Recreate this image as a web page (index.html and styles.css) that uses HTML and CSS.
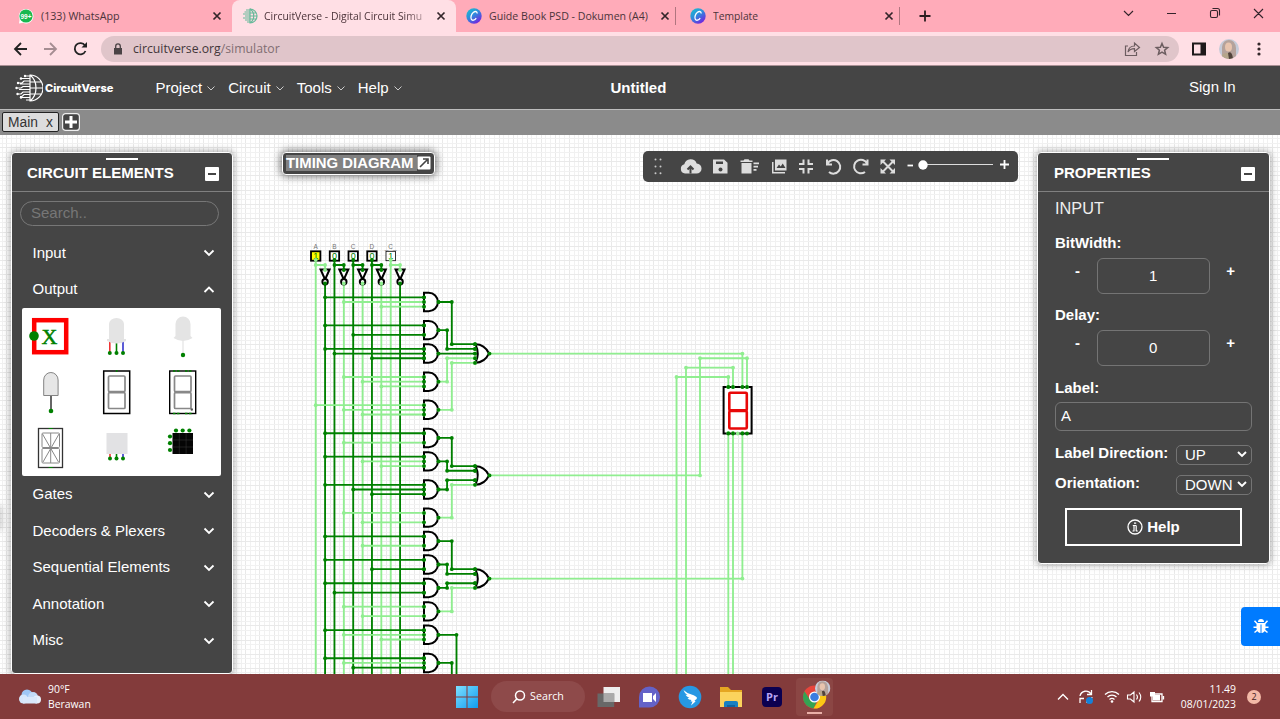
FILE: index.html
```html
<!DOCTYPE html>
<html lang="en">
<head>
<meta charset="utf-8">
<title>CircuitVerse - Digital Circuit Simulator</title>
<link rel="stylesheet" href="styles.css">
</head>
<body>
<div class="screen">
  <header class="tabs">
    <div class="tab tab-first">
      <svg class="fav" viewBox="0 0 16 16"><path d="M1 15.500l.6-4A7.300 7.300 0 1 1 5 14.800z" fill="#fff"/><circle cx="8" cy="8" r="6.600" fill="#18b850"/><text x="8" y="10.500" class="favtext">99+</text></svg>
      <span class="tab-label l1">(133) WhatsApp</span>
      <svg class="x" viewBox="0 0 10 10"><path d="M1.500 1.500l7 7M8.500 1.500l-7 7"/></svg>
    </div>
    <div class="tab tab-active">
      <svg class="fav" viewBox="0 0 16 16" fill="none" stroke="#67b99a" stroke-width="1.200"><path d="M8 1a7 7 0 0 1 0 14zM8 1c5 3 5 11 0 14M8 5h6.500M8 8h7M8 11h6.500M8 2H4M8 4H2.500M8 6H1M8 8H3M8 10H1M8 12H3M8 14H5"/></svg>
      <span class="tab-label l2 fade">CircuitVerse - Digital Circuit Simu</span>
      <svg class="x" viewBox="0 0 10 10"><path d="M1.500 1.500l7 7M8.500 1.500l-7 7"/></svg>
    </div>
    <div class="tab tab-third">
      <svg class="fav" viewBox="0 0 16 16"><circle cx="8" cy="8" r="7.700" fill="url(#canva)"/><path d="M11 5.500c.5-2-1.500-2.700-3.500-1.200S4.300 9 5.200 11s3.600 1.500 5-.8" fill="none" stroke="#fff" stroke-width="1.300"/></svg>
      <span class="tab-label l3">Guide Book PSD - Dokumen (A4)</span>
      <svg class="x" viewBox="0 0 10 10"><path d="M1.500 1.500l7 7M8.500 1.500l-7 7"/></svg>
    </div>
    <div class="tab tab-fourth">
      <svg class="fav" viewBox="0 0 16 16"><defs><linearGradient id="canva" x1="0" y1="0" x2=".7" y2="1"><stop offset="0" stop-color="#18c5cc"/><stop offset=".5" stop-color="#2e8cdc"/><stop offset="1" stop-color="#7422df"/></linearGradient></defs><circle cx="8" cy="8" r="7.700" fill="url(#canva)"/><path d="M11 5.500c.5-2-1.500-2.700-3.500-1.200S4.300 9 5.200 11s3.600 1.500 5-.8" fill="none" stroke="#fff" stroke-width="1.300"/></svg>
      <span class="tab-label l4">Template</span>
      <svg class="x" viewBox="0 0 10 10"><path d="M1.500 1.500l7 7M8.500 1.500l-7 7"/></svg>
    </div>
    <svg class="newtab" viewBox="0 0 12 12"><path d="M6 .5v11M.5 6h11"/></svg>
    <svg class="winctl" viewBox="0 0 150 20"><path d="M5 8l4.500 4.500L14 8M48 10.500h9M135 6l9 9M144 6l-9 9"/><rect x="91.500" y="7.500" width="7" height="7" rx="1.500"/><path d="M93.500 5.500h5a2 2 0 0 1 2 2v5"/></svg>
  </header>

  <div class="address">
    <svg class="nav-icons" viewBox="0 0 80 20"><path d="M20 10H8M14 4l-6 6 6 6" stroke="#222"/><path d="M37 10h12M43 4l6 6-6 6" stroke="#a58d92"/><path d="M79 6.500A5.600 5.600 0 1 0 79.500 12" stroke="#222" transform="translate(-1)"/><path d="M80 3v5.500h-5.500z" fill="#222"/></svg>
    <div class="omnibox">
      <svg class="lock" viewBox="0 0 10 12"><path d="M1 5h8v6.500H1z" fill="#4a4345"/><path d="M2.700 5V3.200a2.300 2.300 0 0 1 4.600 0V5" fill="none" stroke="#4a4345" stroke-width="1.300"/></svg>
      <span class="url">circuitverse.org<span>/simulator</span></span>
      <svg class="omni-icons" viewBox="0 0 46 16"><path d="M4 5H1.500v9.500h11V11M4 11c.5-4 3-6 6.500-6V2l5 4.500-5 4V7.700C8 7.700 5.500 8.500 4 11z"/><path d="M38 2.500l1.600 3.800 4.100.3-3.100 2.700 1 4L38 11.200l-3.600 2.100 1-4-3.100-2.700 4.100-.3z" stroke-width="1.500"/></svg>
    </div>
    <svg class="sidepanel" viewBox="0 0 14 14"><path d="M1 1.500h12v11H1z" fill="none" stroke="#1f1a1b" stroke-width="2"/><path d="M8.500 1h5v12h-5z" fill="#1f1a1b"/></svg>
    <svg class="avatar" viewBox="0 0 20 20"><use href="#face"/></svg>
    <svg class="dots" viewBox="0 0 4 14"><circle cx="2" cy="2" r="1.600"/><circle cx="2" cy="7" r="1.600"/><circle cx="2" cy="12" r="1.600"/></svg>
  </div>

  <nav class="appbar">
    <svg class="logo" viewBox="0 0 28 28" fill="none" stroke="#fff" stroke-width="1.200"><path d="M15 1a13 13 0 0 1 0 26zM15 1c8 6 8 20 0 26M15 8h11M15 14h13M15 20h11"/><path d="M15 2H10M15 4.500H6M15 7H9L7 9H3M15 10H5M15 12.500H8L6 14H1M15 15.500H4M15 18H8l-2 2H2M15 20.500H9l-2 2H5M15 23.500H7M15 26h-4"/><g fill="#fff" stroke="none"><circle cx="10" cy="2" r="1.200"/><circle cx="6" cy="4.500" r="1.200"/><circle cx="3" cy="9" r="1.200"/><circle cx="1.500" cy="14" r="1.200"/><circle cx="2.500" cy="20" r="1.200"/><circle cx="6" cy="23.500" r="1.200"/></g></svg>
    <span class="brand">CircuitVerse</span>
    <ul class="menu">
      <li>Project<svg viewBox="0 0 8 5"><path d="M.5.500L4 4 7.500.5"/></svg></li>
      <li>Circuit<svg viewBox="0 0 8 5"><path d="M.5.500L4 4 7.500.5"/></svg></li>
      <li>Tools<svg viewBox="0 0 8 5"><path d="M.5.500L4 4 7.500.5"/></svg></li>
      <li>Help<svg viewBox="0 0 8 5"><path d="M.5.500L4 4 7.500.5"/></svg></li>
    </ul>
    <strong class="project-name">Untitled</strong>
    <span class="signin">Sign In</span>
  </nav>

  <div class="circuit-tabs">
    <div class="circuit-tab"><span>Main</span><span>x</span></div>
    <svg class="add" viewBox="0 0 18 18"><rect x=".6" y=".6" width="16.800" height="16.800" rx="3" fill="#444" stroke="#eee" stroke-width="1.200"/><path d="M9 3v12M3 9h12" stroke="#fff" stroke-width="3"/></svg>
  </div>

  <main class="workspace">
    <svg class="canvas" id="canvas" viewBox="0 135 1280 539"></svg>

    <section class="panel elements">
      <div class="panel-head"><i class="grip"></i><h2>CIRCUIT ELEMENTS</h2><b class="min"></b></div>
      <div class="search">Search..</div>
      <div class="cat first">Input<svg viewBox="0 0 12 8"><path d="M1.500 1.500L6 6l4.500-4.500"/></svg></div>
      <div class="cat out">Output<svg viewBox="0 0 12 8"><path d="M1.500 6L6 1.500 10.500 6"/></svg></div>
      <div class="parts">
        <svg viewBox="0 0 66 56"><rect x="12.200" y="12.200" width="32" height="32" fill="#fff" stroke="#f00" stroke-width="4.500"/><circle cx="12" cy="28" r="4.800" fill="green"/><text x="27.500" y="35.500" class="xglyph">X</text></svg>
        <svg viewBox="0 0 66 56"><g stroke-width="1.600"><path d="M21.800 33v11" stroke="#e33"/><path d="M28.500 33v11" stroke="green"/><path d="M35 33v11" stroke="#33c"/></g><path d="M21 31V16a7.500 6 0 0 1 15 0v15h2v2q-9.500 5-19 0v-2z" fill="#e4e4e4"/><g fill="green"><circle cx="21.800" cy="45" r="2"/><circle cx="28.500" cy="45" r="2"/><circle cx="35" cy="45" r="2"/></g></svg>
        <svg viewBox="0 0 66 56"><path d="M29 32v13" stroke="#ddd"/><path d="M21.500 28V16a7.500 7.500 0 0 1 15 0v12l2 2q-9.500 6-19 0z" fill="#e4e4e4"/><circle cx="29" cy="47" r="2.200" fill="green"/></svg>
        <svg viewBox="0 0 66 56"><path d="M21.700 31.500V16a7.200 7.500 0 0 1 14.400 0v15.500z" fill="#e6e6e6" stroke="#777" stroke-width=".9"/><path d="M29 32v14" stroke="#333" stroke-width="1.500"/><circle cx="29" cy="47" r="2.300" fill="green"/></svg>
        <svg viewBox="0 0 66 56"><rect x="15.700" y="7" width="26" height="42.500" fill="#fff" stroke="#000" stroke-width="1.500"/><g class="segments"><rect x="20.500" y="12" width="16.500" height="15.500" rx="1"/><rect x="20.500" y="28.700" width="16.500" height="15.800" rx="1"/></g><circle cx="28.700" cy="7" r="1" fill="green"/></svg>
        <svg viewBox="0 0 66 56"><rect x="15.700" y="7" width="26" height="42.500" fill="#fff" stroke="#000" stroke-width="1.400"/><g class="segments"><rect x="20.500" y="12" width="16.500" height="15.500" rx="1"/><rect x="20.500" y="28.700" width="16.500" height="15.800" rx="1"/></g><circle cx="37.800" cy="45.500" r="1.200" fill="#555"/><path d="M19 7h7M31 7h7M19 49.500h7M31 49.500h7" stroke="green" stroke-width="1.600" stroke-dasharray="2.500 1.500"/></svg>
        <svg viewBox="0 0 66 56"><rect x="16.500" y="8.500" width="24" height="39" fill="#fff" stroke="#333" stroke-width="1.300"/><g class="segments thin"><rect x="20" y="13" width="17.500" height="14.500" rx="1"/><rect x="20" y="28.500" width="17.500" height="14.500" rx="1"/><path d="M28.700 13v30M20.500 14l16 28M37 14L21 42"/></g><path d="M26.700 8.500h4M26.700 47.500h4" stroke="green"/></svg>
        <svg viewBox="0 0 66 56"><rect x="18.500" y="13" width="21" height="21" fill="#e2e2e4"/><g stroke-width="1.600"><path d="M22 34v5" stroke="#e33"/><path d="M28.500 34v5" stroke="green"/><path d="M35 34v5" stroke="#33c"/></g><g fill="green"><circle cx="22" cy="38.500" r="2"/><circle cx="28.500" cy="38.500" r="2"/><circle cx="35" cy="38.500" r="2"/></g></svg>
        <svg viewBox="0 0 66 56"><rect x="18.500" y="13" width="20.500" height="21" fill="#050505"/><path d="M25.300 13v21M32.100 13v21M18.500 20h20.500M18.500 27h20.500" stroke="#333" stroke-width=".6"/><g fill="green"><circle cx="22" cy="10.500" r="2.100"/><circle cx="28.700" cy="10.500" r="2.100"/><circle cx="35.400" cy="10.500" r="2.100"/><circle cx="16" cy="16.500" r="2.100"/><circle cx="16" cy="23.200" r="2.100"/><circle cx="16" cy="30" r="2.100"/></g></svg>
      </div>
      <div class="cat">Gates<svg viewBox="0 0 12 8"><path d="M1.500 1.500L6 6l4.500-4.500"/></svg></div>
      <div class="cat">Decoders &amp; Plexers<svg viewBox="0 0 12 8"><path d="M1.500 1.500L6 6l4.500-4.500"/></svg></div>
      <div class="cat">Sequential Elements<svg viewBox="0 0 12 8"><path d="M1.500 1.500L6 6l4.500-4.500"/></svg></div>
      <div class="cat">Annotation<svg viewBox="0 0 12 8"><path d="M1.500 1.500L6 6l4.500-4.500"/></svg></div>
      <div class="cat">Misc<svg viewBox="0 0 12 8"><path d="M1.500 1.500L6 6l4.500-4.500"/></svg></div>
    </section>

    <div class="timing"><span>TIMING DIAGRAM</span><svg viewBox="0 0 14 14"><rect x=".5" y=".5" width="13" height="13" rx="1" fill="#fff"/><path d="M3 11l7-7M6 3h5v5" fill="none" stroke="#444" stroke-width="1.600"/></svg></div>

    <div class="toolbar">
      <svg viewBox="0 0 375 31">
        <g fill="#c8c8c8"><circle cx="12.500" cy="8.500" r="1"/><circle cx="17.500" cy="8.500" r="1"/><circle cx="12.500" cy="15.500" r="1"/><circle cx="17.500" cy="15.500" r="1"/><circle cx="12.500" cy="22.300" r="1"/><circle cx="17.500" cy="22.300" r="1"/></g>
        <g fill="#ddd">
          <path d="M42 22.500a4.700 4.700 0 0 1-.7-9.200 6.500 6.500 0 0 1 12.400-.8 5 5 0 0 1-.3 10z"/>
          <path d="M70 8.500h11l3.500 3.300v10.700H70z"/>
          <path d="M97.500 9.500h3l1-1.300h4l1 1.300h3V11h-12zM98.500 12h10v10.500h-10zM110.500 11.500h5.500v1.700h-5.500zM110.500 14.700h4.500v1.700h-4.500zM110.500 18h3v1.700h-3z"/>
          <path d="M132 8.500h11.500v11H132zM129 11h1.500v10h11.500v1.500h-13z"/>
        </g>
        <path d="M47.500 22.500v-6M44.500 18.500l3-3 3 3" fill="none" stroke="#444" stroke-width="2"/>
        <path d="M73 10.500h7V13h-7z" fill="#444"/><circle cx="77.500" cy="18.500" r="2" fill="#444"/>
        <path d="M133.500 17l2.500-3.500 1.700 2 2-3 2.800 4.500z" fill="#444"/>
        <g fill="none" stroke="#ddd" stroke-width="2">
          <path d="M156 13h4.500V8.500M170 13h-4.500V8.500M156 18h4.500v4.500M170 18h-4.500v4.500"/>
          <path d="M184 8.500v5h5M184.500 12.500A6.800 6.800 0 1 1 186 21"/>
          <path d="M224.500 8.500v5h-5M224 12.500A6.800 6.800 0 1 0 222 21"/>
          <path d="M239.500 10l11 11M250.500 10l-11 11"/>
        </g>
        <path d="M237.500 8.500h5.500l-5.500 5.500zM252 8.500v5.500l-5.500-5.500zM237.500 22.500V17l5.500 5.500zM252 22.500h-5.500L252 17z" fill="#ddd"/>
        <path d="M264.500 14.500h5.500" stroke="#fff" stroke-width="1.800"/><path d="M280 13.500h70" stroke="#ddd"/><circle cx="280" cy="14" r="4.700" fill="#fff"/><path d="M357 13.500h9M361.500 9v9" stroke="#fff" stroke-width="1.800"/>
      </svg>
    </div>

    <section class="panel properties">
      <div class="panel-head"><i class="grip"></i><h2>PROPERTIES</h2><b class="min"></b></div>
      <div class="props">
        <div class="kind">INPUT</div>
        <label class="name">BitWidth:</label>
        <div class="stepper"><b>-</b><div class="num">1</div><b>+</b></div>
        <label class="name">Delay:</label>
        <div class="stepper"><b>-</b><div class="num">0</div><b>+</b></div>
        <label class="name lab">Label:</label>
        <div class="textbox">A</div>
        <div class="row"><label>Label Direction:</label><div class="select">UP<svg viewBox="0 0 10 7"><path d="M1 1l4 4 4-4"/></svg></div></div>
        <div class="row"><label>Orientation:</label><div class="select">DOWN<svg viewBox="0 0 10 7"><path d="M1 1l4 4 4-4"/></svg></div></div>
        <div class="help"><svg viewBox="0 0 16 16"><circle cx="8" cy="8" r="7" fill="none" stroke="#fff" stroke-width="1.300"/><path d="M5.800 6.500h3.400M7 6.500V12M9.200 6.500V12M5.500 12h2M8.800 12h2M7 4.200h2.200" fill="none" stroke="#fff" stroke-width="1.200"/></svg>Help</div>
      </div>
    </section>

    <div class="bug"><svg viewBox="0 0 16 16"><path d="M5 4a3 3 0 0 1 6 0z" fill="#fff"/><path d="M3.500 5h9v5c0 3-2 5-4.500 5s-4.500-2-4.500-5z" fill="#fff"/><path d="M1.500 2.800L4 5.500M14.500 2.800L12 5.500M.5 9.200h15M1.500 14.500L4.500 12M14.500 14.500l-3-2.500" stroke="#fff" stroke-width="1.500"/><path d="M8 6.500V15" stroke="#007bff"/></svg></div>
    <div class="edge"></div>
  </main>

  <footer class="taskbar">
    <svg class="cloud" viewBox="0 0 24 18"><circle cx="9" cy="7" r="5.500" fill="#9fc7f5"/><circle cx="5.500" cy="11" r="4.500" fill="#d5e6fb"/><circle cx="15" cy="9" r="5" fill="#c3dbf8"/><circle cx="19" cy="11.500" r="4" fill="#e6effb"/><path d="M5 9h14v6.500H5z" fill="#d9e8fb"/></svg>
    <div class="weather">90°F<br>Berawan</div>
    <svg class="win" viewBox="0 0 22 22"><defs><linearGradient id="w" x1="0" y1="0" x2="1" y2="1"><stop stop-color="#7de0ff"/><stop offset="1" stop-color="#109bf0"/></linearGradient></defs><path d="M0 0h10.500v10.500H0zM11.500 0H22v10.500H11.500zM0 11.500h10.500V22H0zM11.500 11.500H22V22H11.500z" fill="url(#w)"/></svg>
    <div class="searchpill"><svg viewBox="0 0 14 14"><circle cx="8" cy="5.500" r="4.500"/><path d="M4.700 9L1 13"/></svg>Search</div>
    <div class="apps">
      <svg viewBox="0 0 24 24"><path d="M7.500 2H24v15H7.500z" fill="#eee"/><path d="M1.500 8.500h16.700V22H1.500z" fill="#686868"/><path d="M7.500 8.500h10.700V17H7.500z" fill="#aaa"/></svg>
      <svg viewBox="0 0 24 24"><path d="M2 22.500V12a10.500 10.500 0 1 1 10.500 10.500z" fill="#6462c8"/><path d="M6 8h9v9H6zM16 11l3-3v9l-3-3z" fill="#fff"/></svg>
      <svg viewBox="0 0 24 24"><circle cx="12" cy="12" r="11.300" fill="#2798e3"/><path d="M5.500 5q3 3 8 4.500 5 1.500 5.500 3.500 0 1-2.500 2.500l1 1-4.500 4 1.500-4h-2l1-1.500q-3 0-4-2l2-.3q-3-1-4-3l2 .3q-3-1.500-4-5z" fill="#fff"/></svg>
      <svg viewBox="0 0 24 24"><path d="M1 2h8l3 3h11v17H1z" fill="#e5a622"/><path d="M1 7h22v15H1z" fill="#fbd35d"/><path d="M5 22v-4q0-2 2-2h10q2 0 2 2v4z" fill="#1880c2"/><path d="M8 20h8v2H8z" fill="#0f639f"/></svg>
      <svg viewBox="0 0 24 24"><rect x="2" y="2" width="20" height="20" rx="4" fill="#0b0050"/><text x="12" y="16" class="pr">Pr</text></svg>
    </div>
    <div class="chrome"><svg viewBox="0 0 37 38">
      <defs><clipPath id="round"><circle cx="10" cy="10" r="10"/></clipPath>
      <g id="face" clip-path="url(#round)"><path d="M0 0h20v20H0z" fill="#c6cbd8"/><path d="M3 20V8q1-7 7-7t7 8v11z" fill="#b5a29b"/><ellipse cx="9.500" cy="8" rx="3.500" ry="4.500" fill="#e8c4ae"/><path d="M1 20q2-7 8-6l6 6z" fill="#b5a58b"/><path d="M9 14q4-3 5 6h-4z" fill="#51433b"/></g></defs>
      <circle cx="18.500" cy="19" r="11.500" fill="#e8453c"/><path d="M8.500 13.300A11.500 11.500 0 0 0 17.500 30.500L22 21l-7.500 1.500z" fill="#34a353"/><path d="M17.500 30.500A11.500 11.500 0 0 0 29.500 15H19l4.500 6z" fill="#fbc815"/><circle cx="18.500" cy="19" r="5.500" fill="#fff"/><circle cx="18.500" cy="19" r="4.300" fill="#3b7de0"/><use href="#face" transform="translate(19 2.500) scale(.77)"/></svg></div>
    <svg class="tray" viewBox="0 0 112 20"><g fill="none" stroke="#fff" stroke-width="1.300"><path d="M3 12.500l5-5 5 5"/><path d="M25 9a6 6 0 0 1 11-2M36.500 3v4.500H32M37 10a6 6 0 0 1-6 5M25 16v-4.500h4"/><path d="M50 7.500a10 10 0 0 1 14 0M52.500 10a6.500 6.500 0 0 1 9 0M54.500 12.500a3.800 3.800 0 0 1 5 0"/><path d="M72.500 8v4h3l3.500 3V5l-3.500 3zM81.500 7.500q2 2.500 0 5M84 5.500q3.500 4.500 0 9" stroke-width="1.100"/><path d="M97 7h10v7.500H97zM108.500 9v3.500"/></g><circle cx="34.500" cy="13.500" r="3.500" fill="#1681d8"/><circle cx="57" cy="14.500" r="1.300" fill="#fff"/><path d="M98 8h7v5.500h-7z" fill="#fff"/><path d="M95 5h5v4.500h-5z" fill="#fff"/></svg>
    <div class="clock">11.49<br>08/01/2023</div>
    <div class="notice">2</div>
  </footer>
</div>
<script src="circuit.js"></script>
</body>
</html>
```
FILE: styles.css
```css
* { box-sizing: border-box; }
body { margin: 0; font-family: "Liberation Sans", Arial, sans-serif; }
svg { display: block; flex: none; }
.screen { width: 1280px; height: 719px; display: flex; flex-direction: column; overflow: hidden; }

/* browser tabs */
.tabs { height: 32px; background: #ffabb9; display: flex; flex: none; font: 10.700px "Open Sans", sans-serif; color: #4c343a; }
.tab { display: flex; align-items: center; height: 32px; }
.tab-first { width: 232px; padding-left: 18px; }
.tab-active { width: 224px; padding-left: 10px; background: #ffdfe5; border-radius: 8px 8px 0 0; }
.tab-third { width: 224px; padding-left: 10px; }
.tab-fourth { width: 224px; padding-left: 10px; }
.tab-third, .tab-fourth { background: linear-gradient(#b0757f, #b0757f) right 4px center / 1px 18px no-repeat; }
.fav { width: 16px; height: 16px; }
.favtext { font: bold 6.500px "Liberation Sans"; fill: #fff; text-anchor: middle; }
.tab-label { margin-left: 7px; white-space: nowrap; overflow: hidden; line-height: 20px; }
.l1 { width: 171px; }
.l2 { width: 171px; margin-left: 6px; font-size: 10.400px; }
.l3 { width: 168px; font-size: 10.600px; }
.l4 { width: 168px; font-size: 10.300px; }
.fade { -webkit-mask-image: linear-gradient(90deg, #000 82%, transparent); mask-image: linear-gradient(90deg, #000 82%, transparent); }
.x { width: 10px; height: 10px; stroke: #33252a; stroke-width: 1.700; margin-left: 0; }
.tab-third .x, .tab-fourth .x { margin-left: 3px; }
.tab-active .x { margin-left: 1px; }
.newtab { width: 12px; height: 12px; margin: 10px 0 0 15px; stroke: #2b1d20; stroke-width: 1.800; }
.winctl { width: 150px; height: 20px; margin: 3px 11px 0 auto; fill: none; stroke: #33232a; stroke-width: 1.100; }

/* address row */
.address { height: 34px; flex: none; background: #ffdfe5; display: flex; align-items: center; border-bottom: 1px solid #a98f94; padding-left: 6px; }
.nav-icons { width: 80px; height: 20px; fill: none; stroke-width: 1.800; margin-left: 1px; }
.omnibox { width: 1078px; height: 26px; margin-left: 14px; border-radius: 13px; background: #e0c5ca; display: flex; align-items: center; padding-left: 12px; }
.lock { width: 10px; height: 12px; }
.url { margin-left: 10px; font: 12.250px "Open Sans", sans-serif; color: #43373a; }
.url span { color: #806e72; }
.omni-icons { width: 46px; height: 16px; margin-left: auto; margin-right: 9px; fill: none; stroke: #6c5d60; stroke-width: 1.200; }
.sidepanel { width: 14px; height: 14px; margin-left: 13px; }
.avatar { width: 20px; height: 20px; margin-left: 13px; }
.dots { width: 4px; height: 14px; margin-left: 18px; fill: #33272a; }

/* application bar */
.appbar { height: 43px; flex: none; background: #454545; color: #fff; display: flex; align-items: center; font-size: 15px; padding-left: 15px; }
.logo { width: 28px; height: 28px; }
.brand { width: 110.500px; margin-left: 2px; font: 800 11px Inter, sans-serif; }
.menu { display: flex; list-style: none; margin: 0; padding: 0; width: 455px; gap: 13px; }
.menu li { display: flex; align-items: center; }
.menu svg { width: 8px; height: 5px; margin: 2px 0 0 5px; fill: none; stroke: #ccc; stroke-width: 1; }
.project-name { width: 578.500px; }
.signin { padding-bottom: 2px; }
.circuit-tabs { height: 26px; flex: none; background: #8b8b8b; border-top: 1px solid #bdbdbd; display: flex; align-items: center; padding: 0 0 1px 2px; gap: 3px; }
.circuit-tab { width: 57px; height: 20px; background: #ddd; border: 1px solid #222; border-radius: 2px; display: flex; justify-content: space-between; padding: 0 5px; font-size: 13.800px; line-height: 19px; color: #333; }
.add { width: 18px; height: 18px; }

/* workspace */
.workspace { position: relative; height: 539px; flex: none; overflow: hidden; background: #fff; }
.canvas { width: 1280px; height: 539px; }
.panel { position: absolute; top: 17px; background: #454545; color: #fff; border: 1px solid #fff; border-radius: 4px; box-shadow: 0 0 7px 1px #0005; font-size: 15px; }
.elements { left: 11px; width: 222px; height: 522px; }
.properties { left: 1037px; width: 233px; height: 412px; }
.panel-head { height: 39px; border-bottom: 1px solid #808080; display: flex; align-items: center; justify-content: space-between; padding: 2px 13px 0 15px; position: relative; }
.properties .panel-head { padding-left: 16px; padding-right: 14px; }
.panel-head h2 { margin: 0; font-size: 15px; line-height: 20px; }
.grip { position: absolute; top: 5px; left: 94px; width: 32px; height: 2px; background: #fff; }
.properties .grip { left: 99px; }
.min { width: 14px; height: 14px; margin-top: 1px; border-radius: 1px; background: linear-gradient(#444, #444) center / 8px 2px no-repeat #fff; }
.search { width: 199px; height: 25px; margin: 9px 0 0 8px; border: 1px solid #777; border-radius: 13px; padding-left: 10px; line-height: 22px; color: #777; }
.cat { height: 36.400px; display: flex; align-items: center; justify-content: space-between; padding: 0 17.500px 0 20.500px; }
.cat.first { margin-top: 8px; }
.cat svg { width: 12px; height: 8px; margin-top: 2px; fill: none; stroke: #fff; stroke-width: 1.800; }
.parts { width: 199px; height: 168px; margin: 1px 0 0 10px; background: #fff; border-radius: 2px; display: grid; grid-template-columns: repeat(3, 66px); grid-template-rows: repeat(3, 56px); }
.parts svg { width: 66px; height: 56px; }
.xglyph { font: 22px "Liberation Serif"; fill: green; stroke: green; stroke-width: .5; text-anchor: middle; }
.segments { fill: none; stroke: #888; stroke-width: 1.700; }
.thin { stroke-width: 1; }
.timing { position: absolute; left: 282px; top: 17px; width: 153px; height: 23px; border: 1px solid #fff; border-radius: 4px; background: #454545; box-shadow: 0 0 8px 1px #0009; color: #fff; display: flex; align-items: center; padding: 0 0 1px 3px; font: bold 14.900px "Liberation Sans"; }
.timing span { background: #818181; line-height: 16px; padding-right: 4px; white-space: nowrap; }
.timing svg { width: 14px; height: 14px; }
.toolbar { position: absolute; left: 643px; top: 16px; width: 375px; height: 31px; background: #454545; border-radius: 5px; }
.toolbar svg { width: 375px; height: 31px; }
.props { padding: 0 17px; display: flex; flex-direction: column; }
.kind { font-size: 16.300px; line-height: 20px; margin-top: 6px; color: #eee; }
.name { font-weight: bold; line-height: 20px; margin-top: 15px; }
.stepper { display: flex; justify-content: space-between; align-items: flex-start; height: 35px; margin-top: 5px; padding: 0 17px 0 20px; }
.stepper + .name { margin-top: 12px; }
.stepper b { line-height: 26px; }
.num { width: 113px; height: 36px; border: 1px solid #747474; border-radius: 6px; text-align: center; line-height: 33px; margin-left: 1px; }
.stepper b:last-child { margin-left: 1px; }
.name.lab { margin-top: 13px; }
.textbox { width: 197px; height: 29px; margin-top: 4px; border: 1px solid #747474; border-radius: 6px; padding-left: 5px; line-height: 26px; }
.row { height: 30px; display: flex; justify-content: space-between; font-weight: bold; }
.textbox + .row { margin-top: 10px; }
.row label { line-height: 23px; }
.select { width: 76px; height: 20px; margin: 4px 0 0 0; border: 1px solid #747474; border-radius: 5px; display: flex; justify-content: space-between; align-items: center; padding: 0 4px 1px 8px; font-weight: normal; }
.select svg { width: 10px; height: 7px; fill: none; stroke: #fff; stroke-width: 1.900; }
.help { width: 177px; height: 38px; margin: 7px 0 0 10px; border: 2px solid #fff; display: flex; align-items: center; justify-content: center; gap: 4px; padding-bottom: 1px; font-weight: bold; }
.help svg { width: 16px; height: 16px; }
.bug { position: absolute; left: 1241px; top: 472px; width: 42px; height: 39px; border-radius: 4px; background: #007bff; padding: 11px 12px; }
.bug svg { width: 16px; height: 16px; }
.edge { position: absolute; left: -4px; top: 372px; width: 4px; height: 22px; box-shadow: 0 0 7px 1px #0004; }

/* circuit drawing */
.dark { stroke: green; }
.light { stroke: #90ee90; }
.dark-dot { fill: green; }
.light-dot { fill: #90ee90; }
.wire { stroke-width: 1.850; fill: none; }
.gate { fill: #fff; stroke: #000; stroke-width: 2; }
.tag { font: 6.500px "Liberation Sans"; fill: #777; text-anchor: middle; }
.bit { font: 9px "Liberation Sans"; fill: green; text-anchor: middle; }

/* taskbar */
.taskbar { height: 45px; flex: none; background: #833b3b; color: #fff; display: flex; align-items: center; padding-left: 18px; font: 10.400px/15px "Open Sans", sans-serif; }
.cloud { width: 24px; height: 18px; }
.weather { margin-left: 6px; width: 408px; }
.win { width: 22px; height: 22px; }
.searchpill { width: 94px; height: 31px; margin-left: 13px; border-radius: 16px; background: #8e4a4a; display: flex; align-items: center; justify-content: center; gap: 4px; font-size: 10.700px; }
.searchpill svg { width: 14px; height: 14px; fill: none; stroke: #fff; stroke-width: 1.500; }
.apps { display: flex; gap: 17px; margin-left: 11px; }
.apps svg { width: 24px; height: 24px; }
.pr { font: bold 11px "Open Sans"; fill: #b7a4f5; text-anchor: middle; }
.chrome { width: 37px; height: 38px; margin-left: 12px; border-radius: 4px; background: linear-gradient(#eab0a8, #eab0a8) center bottom 2px / 15px 2px no-repeat #8b4644; }
.chrome svg { width: 37px; height: 38px; }
.tray { width: 112px; height: 20px; margin-left: 222px; }
.clock { margin-left: auto; text-align: right; }
.notice { width: 14px; height: 14px; margin: 0 19px 0 11px; border-radius: 50%; background: #f3b9a7; color: #43201d; text-align: center; line-height: 14px; font-size: 9px; }
```
FILE: circuit.js
```js
const U = 4.6875;
const X = g => 315.7 + g * U;
const Y = h => 302 + h * U;
const IN = 424, OUT = 438.5, OR_IN = 475, OR_OUT = 489.5;
const BOTTOM = 675;
let grid = '', wires = '', shapes = '', dots = '';

for (let i = -68; i < 210; i++) {
  const x = Math.round(X(i)) + 0.5;
  grid += `<path d="M${x} 135V674" stroke="${i % 3 ? '#f1f1f1' : '#e9e9e9'}"/>`;
}
for (let i = -36; i < 80; i++) {
  const y = Math.round(Y(i)) + 0.5;
  grid += `<path d="M0 ${y}H1280" stroke="${i % 3 ? '#f1f1f1' : '#e9e9e9'}"/>`;
}

const dot = (x, y, c) => { dots += `<circle cx="${x}" cy="${y}" r="1.9" class="${c}-dot"/>`; };
const wire = (pts, c) => {
  wires += `<polyline class="wire ${c}" points="${pts.map(p => p.join(',')).join(' ')}"/>`;
  pts.forEach(p => p[1] < 674 && dot(p[0], p[1], c));
};

const columnColor = { 0: 'light', 2: 'dark', 4: 'dark', 6: 'light', 8: 'dark', 10: 'light', 12: 'dark', 14: 'light', 16: 'light', 18: 'dark' };

// Input pins with their inverters
[['A', 1, 0], ['B', 0, 4], ['C', 0, 8], ['D', 0, 12], ['_C_', 1, 16]].forEach(([name, value, g], i) => {
  const x = X(g), nx = X(g + 2), c = columnColor[g], inv = columnColor[g + 2];
  wire([[x, 260], [x, BOTTOM]], c);
  wire([[x, 265], [nx, 265], [nx, 270]], c);
  wire([[nx, 283.5], [nx, BOTTOM]], inv);
  shapes += `<rect x="${x - 4.7}" y="251.300" width="9.400" height="9.400" fill="${i ? '#fff' : '#ff0'}" stroke="#000" stroke-width="${i === 4 ? 0.8 : 1.8}"/>`;
  shapes += `<text class="bit" x="${x}" y="259.200">${value}</text><text class="tag" x="${x}" y="249">${name}</text>`;
  shapes += `<path class="gate" d="M${nx - 4.5} 269.500h9l-4.500 10z"/><circle class="gate" cx="${nx}" cy="281.800" r="2.700"/>`;
});

// AND gates: row, inputs as [column, offset], output bend x, target row
const gates = [
  [0, [[2, -1], [6, 0], [14, 1]], 451.8, 9, 'dark'],
  [6, [[2, -1], [8, 1]], 447.1, 10, 'dark'],
  [11, [[2, -1], [4, 0], [12, 1]], 0, 11, 'dark'],
  [17, [[6, -1], [10, 0], [14, 1]], 447.1, 12, 'light'],
  [23, [[0, -1], [6, 0], [10, 1]], 451.8, 13, 'light'],
  [29, [[2, -1], [6, 1]], 451.8, 35, 'dark'],
  [34, [[2, -1], [10, 0], [14, 1]], 447.1, 36, 'dark'],
  [40, [[2, -1], [8, 0], [12, 1]], 447.1, 38, 'dark'],
  [46, [[6, -1], [10, 1]], 451.8, 39, 'light'],
  [51, [[2, -1], [10, 1]], 451.8, 57, 'dark'],
  [56, [[2, -1], [12, 1]], 447.1, 58, 'dark'],
  [61, [[2, -1], [4, 1]], 447.1, 60, 'dark'],
  [66, [[6, -1], [10, 1]], 451.8, 61, 'light'],
  [71, [[2, -1], [6, 0], [14, 1]], 456.5, null, 'dark'],
  [77, [[2, -1], [6, 0], [8, 1]], 451.8, null, 'dark']
];
gates.forEach(([h, inputs, bend, target, c]) => {
  const y = Y(h);
  inputs.forEach(([g, o]) => {
    wire([[X(g), Y(h + o)], [IN, Y(h + o)]], columnColor[g]);
    dot(IN, Y(h + o), 'dark');
  });
  if (target === null) wire([[OUT, y], [bend, y], [bend, BOTTOM]], c);
  else if (!bend) wire([[OUT, y], [OR_IN, y]], c);
  else wire([[OUT, y], [bend, y], [bend, Y(target)], [OR_IN, Y(target)]], c);
  if (target !== null) dot(OR_IN, Y(target), 'dark');
  dot(OUT, y, 'dark');
  shapes += `<path class="gate" d="M${IN} ${y - 9.2}h4.700a9.200 9.200 0 0 1 0 18.400h-4.700z"/>`;
});

[11, 37, 59].forEach(h => {
  const y = Y(h);
  shapes += `<path class="gate" d="M475.500 ${y - 9.2}Q484.500 ${y - 9.2} 489 ${y}Q484.500 ${y + 9.2} 475.500 ${y + 9.2}Q480 ${y} 475.500 ${y - 9.2}z"/>`;
});

wire([[OR_OUT, Y(11)], [742.4, Y(11)], [742.4, 387]], 'light');
wire([[OR_OUT, Y(37)], [700, Y(37)], [700, Y(12)], [747, Y(12)], [747, 387]], 'light');
wire([[OR_OUT, Y(59)], [742.4, Y(59)], [742.4, 433]], 'light');
wire([[676.5, BOTTOM], [676.5, Y(16)], [728.3, Y(16)], [728.3, 387]], 'light');
wire([[686, BOTTOM], [686, Y(14)], [733, Y(14)], [733, 387]], 'light');
wire([[728.3, 433], [728.3, BOTTOM]], 'light');
wire([[733, 433], [733, BOTTOM]], 'light');
[11, 37, 59].forEach(h => dot(OR_OUT, Y(h), 'dark'));

// Seven segment display
shapes += '<rect class="gate" x="723.600" y="387" width="28" height="46.500" stroke-width="1.800"/><g fill="none" stroke="#e80808" stroke-width="2.600"><rect x="729.300" y="392.700" width="17.500" height="17.500" rx="1"/><rect x="729.300" y="411" width="17.500" height="17.500" rx="1"/></g>';
[728.3, 733, 742.4, 747].forEach(x => { dot(x, 387, 'dark'); dot(x, 433.5, 'dark'); });
dot(737.7, 433.5, 'light');

document.getElementById('canvas').innerHTML = grid + wires + shapes + dots;
```
